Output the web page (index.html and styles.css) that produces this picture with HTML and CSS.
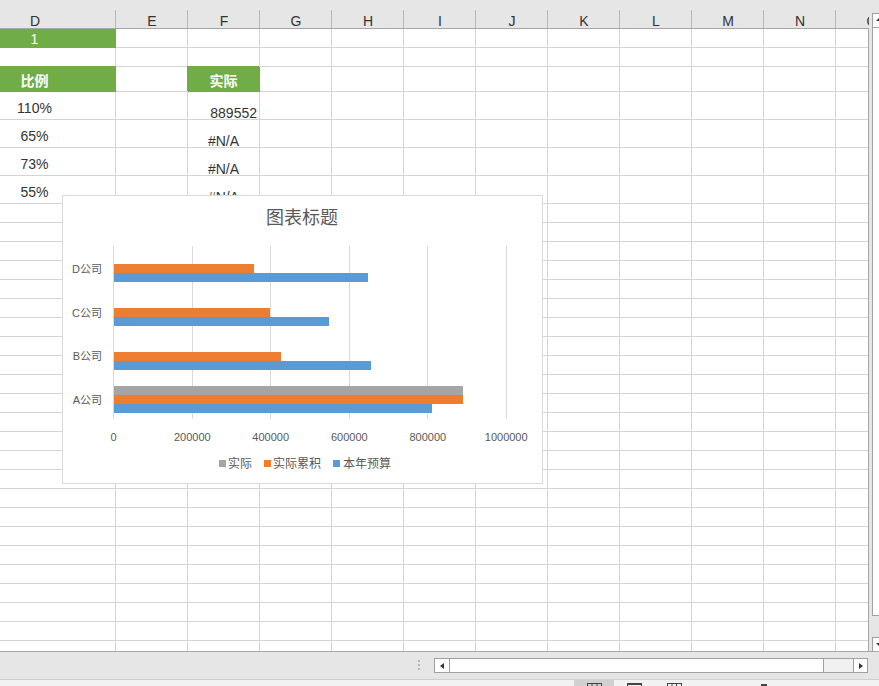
FILE: index.html
```html
<!DOCTYPE html>
<html lang="zh-CN">
<head>
<meta charset="utf-8">
<title>Sheet</title>
<link rel="stylesheet" href="styles.css">
</head>
<body>
<div class="app">
  <div class="main">
    <div class="sheet">
      <div class="colhead">
        <div class="h hd">D</div><div class="h">E</div><div class="h">F</div><div class="h">G</div><div class="h">H</div><div class="h">I</div><div class="h">J</div><div class="h">K</div><div class="h">L</div><div class="h">M</div><div class="h">N</div><div class="h">O</div>
      </div>
      <div class="body">
        <div class="row r19 r1">
          <div class="c cd green">1</div><div class="c"></div><div class="c"></div><div class="c"></div><div class="c"></div><div class="c"></div><div class="c"></div><div class="c"></div><div class="c"></div><div class="c"></div><div class="c"></div><div class="c"></div>
        </div>
        <div class="row r19">
          <div class="c cd"></div><div class="c"></div><div class="c"></div><div class="c"></div><div class="c"></div><div class="c"></div><div class="c"></div><div class="c"></div><div class="c"></div><div class="c"></div><div class="c"></div><div class="c"></div>
        </div>
        <div class="row r25 r3">
          <div class="c cd green bold top">比例</div><div class="c"></div><div class="c green bold topleft">实际</div><div class="c"></div><div class="c"></div><div class="c"></div><div class="c"></div><div class="c"></div><div class="c"></div><div class="c"></div><div class="c"></div><div class="c"></div>
        </div>
        <div class="row r28">
          <div class="c cd pct">110%</div><div class="c"></div><div class="c fv num">889552</div><div class="c"></div><div class="c"></div><div class="c"></div><div class="c"></div><div class="c"></div><div class="c"></div><div class="c"></div><div class="c"></div><div class="c"></div>
        </div>
        <div class="row r28">
          <div class="c cd pct">65%</div><div class="c"></div><div class="c fv">#N/A</div><div class="c"></div><div class="c"></div><div class="c"></div><div class="c"></div><div class="c"></div><div class="c"></div><div class="c"></div><div class="c"></div><div class="c"></div>
        </div>
        <div class="row r28">
          <div class="c cd pct">73%</div><div class="c"></div><div class="c fv">#N/A</div><div class="c"></div><div class="c"></div><div class="c"></div><div class="c"></div><div class="c"></div><div class="c"></div><div class="c"></div><div class="c"></div><div class="c"></div>
        </div>
        <div class="row r28">
          <div class="c cd pct">55%</div><div class="c"></div><div class="c fv">#N/A</div><div class="c"></div><div class="c"></div><div class="c"></div><div class="c"></div><div class="c"></div><div class="c"></div><div class="c"></div><div class="c"></div><div class="c"></div>
        </div>
        <div class="fill">
          <div class="fc"></div><div class="fc"></div><div class="fc"></div><div class="fc"></div><div class="fc"></div><div class="fc"></div><div class="fc"></div><div class="fc"></div><div class="fc"></div><div class="fc"></div><div class="fc"></div><div class="fc"></div>
        </div>
      </div>

      <div class="chart">
        <svg class="plot" width="479" height="287" viewBox="63 196 479 287">
          <text class="ttl" x="302" y="224">图表标题</text>
          <g class="gl">
            <line x1="113.5" y1="246" x2="113.5" y2="419"/>
            <line x1="192.5" y1="246" x2="192.5" y2="419"/>
            <line x1="270.5" y1="246" x2="270.5" y2="419"/>
            <line x1="349.5" y1="246" x2="349.5" y2="419"/>
            <line x1="427.5" y1="246" x2="427.5" y2="419"/>
            <line x1="506.5" y1="246" x2="506.5" y2="419"/>
          </g>
          <g class="s-org">
            <rect x="114" y="264" width="140" height="9"/>
            <rect x="114" y="308" width="156" height="9"/>
            <rect x="114" y="352" width="167" height="9"/>
            <rect x="114" y="395" width="349" height="9"/>
          </g>
          <g class="s-blue">
            <rect x="114" y="273" width="254" height="9"/>
            <rect x="114" y="317" width="215" height="9"/>
            <rect x="114" y="361" width="257" height="9"/>
            <rect x="114" y="404" width="318" height="9"/>
          </g>
          <g class="s-gray">
            <rect x="114" y="386" width="349" height="9"/>
          </g>
          <g class="cat">
            <text x="102" y="272.5">D公司</text>
            <text x="102" y="316.5">C公司</text>
            <text x="102" y="360">B公司</text>
            <text x="102" y="403.5">A公司</text>
          </g>
          <g class="val">
            <text x="113.5" y="441">0</text>
            <text x="192.3" y="441">200000</text>
            <text x="270.7" y="441">400000</text>
            <text x="349.3" y="441">600000</text>
            <text x="427.8" y="441">800000</text>
            <text x="506.2" y="441">1000000</text>
          </g>
          <g class="leg">
            <rect class="k-gray" x="219" y="460" width="7" height="7"/>
            <text x="228" y="467.5">实际</text>
            <rect class="k-org" x="264" y="460" width="7" height="7"/>
            <text x="273" y="467.5">实际累积</text>
            <rect class="k-blue" x="333" y="460" width="7" height="7"/>
            <text x="343" y="467.5">本年预算</text>
          </g>
        </svg>
      </div>
    </div>

    <div class="vscroll">
      <div class="vbtn"><span class="tri-up"></span></div>
      <div class="vthumb"></div>
      <div class="vtrack"></div>
      <div class="vbtn vbtn-down"><span class="tri-down"></span></div>
    </div>
  </div>

  <div class="hbar">
    <div class="dots"></div>
    <div class="hscroll">
      <div class="hbtn hbtn-l"><span class="tri-left"></span></div>
      <div class="hthumb"></div>
      <div class="htrack"></div>
      <div class="hbtn hbtn-r"><span class="tri-right"></span></div>
    </div>
  </div>

  <div class="status">
    <div class="view active">
      <svg class="vi" width="15" height="13" viewBox="0 0 15 13"><rect x="0.5" y="0.5" width="14" height="12"/><line x1="5" y1="0" x2="5" y2="13"/><line x1="10" y1="0" x2="10" y2="13"/><line x1="0" y1="4.5" x2="15" y2="4.5"/><line x1="0" y1="8.5" x2="15" y2="8.5"/></svg>
    </div>
    <div class="view">
      <svg class="vi" width="15" height="13" viewBox="0 0 15 13"><rect x="0.5" y="0.5" width="14" height="12"/><line x1="0" y1="1.5" x2="15" y2="1.5"/><line x1="4" y1="4.5" x2="11" y2="4.5"/><line x1="4" y1="7.5" x2="11" y2="7.5"/></svg>
    </div>
    <div class="view">
      <svg class="vi" width="15" height="13" viewBox="0 0 15 13"><rect x="0.5" y="0.5" width="14" height="12"/><line x1="5" y1="0" x2="5" y2="13"/><line x1="9.5" y1="0" x2="9.5" y2="13"/></svg>
    </div>
    <div class="zoomminus"></div>
  </div>
</div>
</body>
</html>
```

FILE: styles.css
```css
html, body {
  margin: 0;
  padding: 0;
}
body {
  width: 879px;
  height: 686px;
  overflow: hidden;
  background: #ffffff;
  font-family: "Liberation Sans", "Noto Sans CJK SC", sans-serif;
  color: #333333;
}
.app {
  display: flex;
  flex-direction: column;
  width: 879px;
  height: 686px;
}
.main {
  display: flex;
  height: 651px;
  flex: none;
}

/* ---------- sheet ---------- */
.sheet {
  position: relative;
  width: 869px;
  height: 651px;
  flex: none;
  display: flex;
  flex-direction: column;
  overflow: hidden;
}
.colhead {
  display: grid;
  grid-template-columns: 116px repeat(11, 72px);
  width: 869px;
  height: 29px;
  flex: none;
  box-sizing: border-box;
  background: #e6e6e6;
  border-bottom: 1px solid #a6a6a6;
  overflow: hidden;
}
.h {
  display: flex;
  justify-content: center;
  align-items: flex-end;
  padding-bottom: 1px;
  box-sizing: border-box;
  font-size: 14px;
  line-height: 12px;
  color: #333333;
  background: linear-gradient(#b8b8b8, #b8b8b8) right bottom / 1px 18px no-repeat;
}
.hd {
  padding-right: 46px;
}
.body {
  flex: 1;
  display: flex;
  flex-direction: column;
  border-right: 1px solid #a6a6a6;
  overflow: hidden;
}
.row {
  display: grid;
  grid-template-columns: 116px repeat(11, 72px);
  flex: none;
}
.r19 { height: 19px; }
.r25 { height: 25px; }
.r28 { height: 28px; }
.c {
  box-sizing: border-box;
  border-right: 1px solid #d4d4d4;
  border-bottom: 1px solid #d4d4d4;
  display: flex;
  align-items: flex-end;
  justify-content: center;
  font-size: 14px;
  line-height: 12px;
  white-space: nowrap;
  color: #333333;
}
.cd {
  padding-right: 46px;
}
.r1 .c { padding-bottom: 2px; }
.r3 .c { padding-bottom: 4px; }
.pct { padding-bottom: 5px; }
.fv { padding-bottom: 0; }
.num {
  justify-content: flex-end;
  padding-right: 2px;
}
.green {
  background: #70ad47;
  border-color: #70ad47;
  color: #ffffff;
}
.bold { font-weight: bold; }
.top { box-shadow: 0 -1px 0 #70ad47; }
.topleft { box-shadow: -1px -1px 0 #70ad47; }

.fill {
  flex: 1;
  display: grid;
  grid-template-columns: 116px repeat(11, 72px);
}
.fc {
  box-sizing: border-box;
  border-right: 1px solid #d4d4d4;
  background: repeating-linear-gradient(to bottom, transparent 0 18px, #d4d4d4 18px 19px);
}

/* ---------- chart ---------- */
.chart {
  position: absolute;
  left: 62px;
  top: 195px;
  width: 481px;
  height: 289px;
  box-sizing: border-box;
  border: 1px solid #d9d9d9;
  background: #ffffff;
}
.plot {
  display: block;
}
.plot text {
  font-family: "Liberation Sans", "Noto Sans CJK SC", sans-serif;
  font-size: 11px;
  fill: #595959;
}
.plot .ttl {
  font-family: "Noto Sans CJK SC", sans-serif;
  font-size: 18px;
  text-anchor: middle;
}
.plot .gl line {
  stroke: #d9d9d9;
  stroke-width: 1;
}
.plot .s-org rect, .plot .k-org { fill: #ed7d31; }
.plot .s-blue rect, .plot .k-blue { fill: #5b9bd5; }
.plot .s-gray rect, .plot .k-gray { fill: #a5a5a5; }
.plot .cat text { text-anchor: end; }
.plot .val text { text-anchor: middle; }
.plot .leg text { font-size: 12px; }

/* ---------- vertical scrollbar ---------- */
.vscroll {
  width: 10px;
  height: 651px;
  flex: none;
  box-sizing: border-box;
  background: #e6e6e6;
  padding: 13px 0 0 3px;
  display: flex;
  flex-direction: column;
  overflow: hidden;
}
.vbtn {
  height: 15px;
  flex: none;
  box-sizing: border-box;
  border: 1px solid #a0a0a0;
  border-right: none;
  background: #ffffff;
  padding: 4px 0 0 3px;
}
.vbtn-down {
  height: 14px;
  border-bottom: none;
  padding-top: 5px;
}
.vthumb {
  height: 588px;
  flex: none;
  box-sizing: border-box;
  border-left: 1px solid #a0a0a0;
  border-bottom: 1px solid #a0a0a0;
  background: #ffffff;
}
.vtrack {
  flex: 1;
}
.tri-up {
  display: block;
  width: 0;
  height: 0;
  border-left: 3px solid transparent;
  border-right: 3px solid transparent;
  border-bottom: 3px solid #333333;
}
.tri-down {
  display: block;
  width: 0;
  height: 0;
  border-left: 3px solid transparent;
  border-right: 3px solid transparent;
  border-top: 3px solid #333333;
}

/* ---------- horizontal bar ---------- */
.hbar {
  height: 29px;
  flex: none;
  box-sizing: border-box;
  border-top: 1px solid #a6a6a6;
  border-bottom: 1px solid #cfcfcf;
  background: #e6e6e6;
  display: flex;
  justify-content: flex-end;
  align-items: flex-start;
  padding: 6px 11px 0 0;
}
.dots {
  width: 2px;
  height: 10px;
  margin: 2px 14px 0 0;
  background: repeating-linear-gradient(to bottom, #b9b9b9 0 2px, transparent 2px 4px);
}
.hscroll {
  width: 434px;
  height: 15px;
  box-sizing: border-box;
  border: 1px solid #a0a0a0;
  background: #f0f0f0;
  display: flex;
}
.hbtn {
  box-sizing: border-box;
  background: #ffffff;
  display: flex;
  align-items: center;
  justify-content: center;
}
.hbtn-l {
  width: 15px;
  border-right: 1px solid #a0a0a0;
}
.hbtn-r {
  width: 14px;
  border-left: 1px solid #a0a0a0;
}
.hthumb {
  width: 374px;
  box-sizing: border-box;
  border-right: 1px solid #a0a0a0;
  background: #ffffff;
}
.htrack {
  flex: 1;
}
.tri-left {
  width: 0;
  height: 0;
  border-top: 3px solid transparent;
  border-bottom: 3px solid transparent;
  border-right: 4px solid #333333;
}
.tri-right {
  width: 0;
  height: 0;
  border-top: 3px solid transparent;
  border-bottom: 3px solid transparent;
  border-left: 4px solid #333333;
}

/* ---------- status bar ---------- */
.status {
  height: 26px;
  flex: none;
  background: #f3f2f1;
  display: flex;
  align-items: flex-start;
  padding-left: 574px;
}
.view {
  width: 40px;
  height: 26px;
  display: flex;
  justify-content: center;
  padding-top: 3px;
  box-sizing: border-box;
}
.view.active {
  background: #d2d0ce;
}
.vi rect, .vi line {
  fill: none;
  stroke: #444444;
  stroke-width: 1;
}
.zoomminus {
  width: 6px;
  height: 2px;
  margin: 4px 0 0 67px;
  background: #444444;
}
```
